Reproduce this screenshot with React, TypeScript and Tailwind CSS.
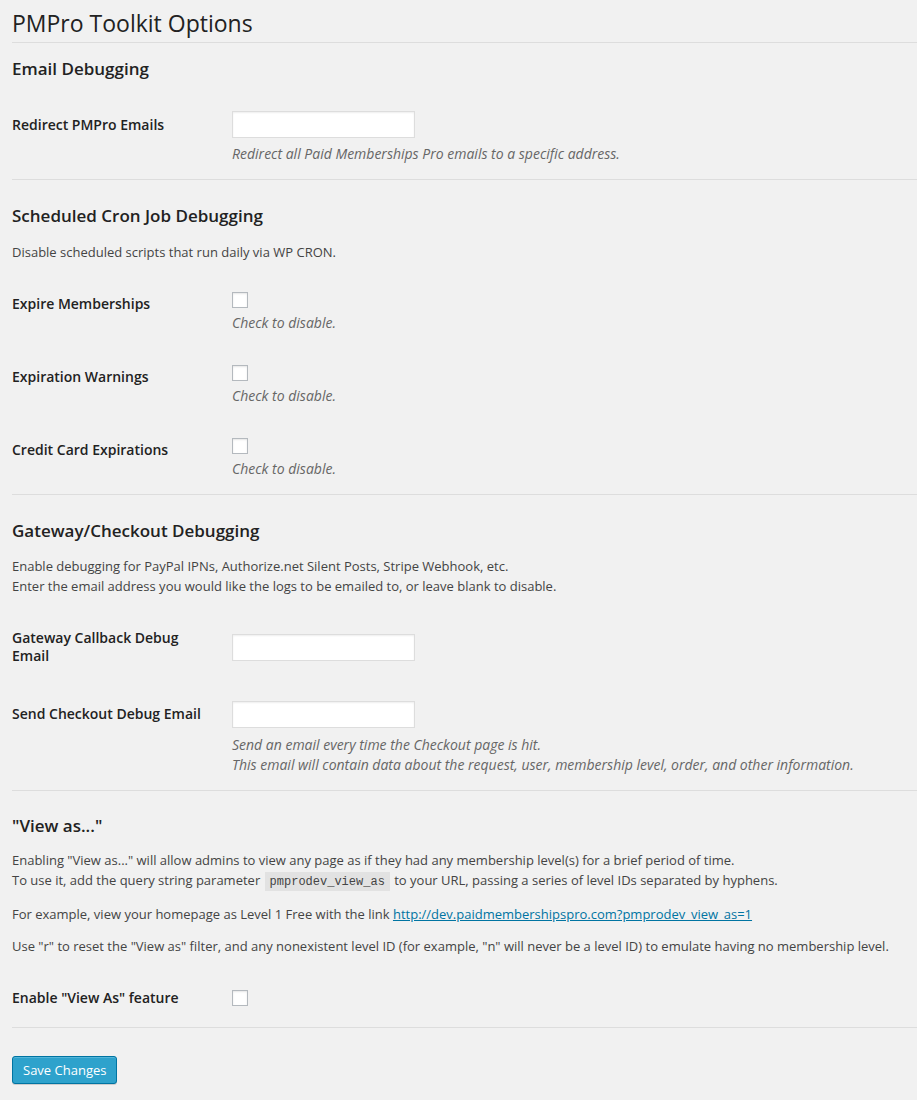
import React from 'react';

const font = { fontFamily: '"Open Sans", "Liberation Sans", sans-serif' };

function TextInput() {
  return (
    <input
      type="text"
      className="block w-[183px] h-[27px] bg-white border border-[#dddddd] shadow-[inset_0_1px_2px_rgba(0,0,0,0.07)] outline-none"
    />
  );
}

function Checkbox() {
  return (
    <span className="block w-[16px] h-[16px] bg-white border border-[#b4b9be] shadow-[inset_0_1px_2px_rgba(0,0,0,0.1)]" />
  );
}

function Heading({ children }: { children: React.ReactNode }) {
  return (
    <h3 className="text-[17px] leading-[24px] font-semibold text-[#222222]">{children}</h3>
  );
}

function Label({ children }: { children: React.ReactNode }) {
  return (
    <div className="w-[220px] shrink-0 pt-[20px] pb-[20px] pr-[10px] text-[14px] leading-[18px] font-semibold text-[#222222]">
      {children}
    </div>
  );
}

function Description({ children }: { children: React.ReactNode }) {
  return <p className="text-[14px] leading-[20px] italic text-[#666666]">{children}</p>;
}

function CheckRow({ label }: { label: string }) {
  return (
    <div className="flex">
      <Label>{label}</Label>
      <div className="py-[15px] flex flex-col justify-center">
        <div className="h-[18px] pt-[2px]">
          <Checkbox />
        </div>
        <div className="mt-[5px]">
          <Description>Check to disable.</Description>
        </div>
      </div>
    </div>
  );
}

export default function App() {
  return (
    <div className="min-h-[1100px] bg-[#f1f1f1] text-[#444444] text-[13px]" style={font}>
      <div className="pl-[12px]">
        {/* Page title */}
        <h1 className="pt-[9px] pb-[4px] text-[23px] leading-[29px] font-normal text-[#222222] border-b border-[#dddddd]">
          PMPro Toolkit Options
        </h1>

        {/* Email Debugging */}
        <div className="border-b border-[#dddddd]">
          <div className="mt-[14px]">
            <Heading>Email Debugging</Heading>
          </div>
          <div className="flex mt-[15px]">
            <Label>Redirect PMPro Emails</Label>
            <div className="py-[15px] flex flex-col justify-center">
              <TextInput />
              <div className="mt-[6px]">
                <Description>Redirect all Paid Memberships Pro emails to a specific address.</Description>
              </div>
            </div>
          </div>
        </div>

        {/* Scheduled Cron Job Debugging */}
        <div className="border-b border-[#dddddd]">
          <div className="mt-[24px]">
            <Heading>Scheduled Cron Job Debugging</Heading>
          </div>
          <p className="mt-[14px] leading-[20px]">Disable scheduled scripts that run daily via WP CRON.</p>
          <div className="mt-[13px]">
            <CheckRow label="Expire Memberships" />
            <CheckRow label="Expiration Warnings" />
            <CheckRow label="Credit Card Expirations" />
          </div>
        </div>

        {/* Gateway/Checkout Debugging */}
        <div className="border-b border-[#dddddd]">
          <div className="mt-[24px]">
            <Heading>Gateway/Checkout Debugging</Heading>
          </div>
          <p className="mt-[14px] leading-[19.5px]">
            Enable debugging for PayPal IPNs, Authorize.net Silent Posts, Stripe Webhook, etc.
            <br />
            Enter the email address you would like the logs to be emailed to, or leave blank to disable.
          </p>
          <div className="mt-[13px]">
            <div className="flex">
              <Label>
                Gateway Callback Debug
                <br />
                Email
              </Label>
              <div className="py-[15px] flex flex-col justify-center">
                <TextInput />
              </div>
            </div>
            <div className="flex">
              <Label>Send Checkout Debug Email</Label>
              <div className="py-[15px] flex flex-col justify-center">
                <div className="mt-[1px]">
                  <TextInput />
                </div>
                <div className="mt-[7px]">
                  <Description>
                    Send an email every time the Checkout page is hit.
                    <br />
                    This email will contain data about the request, user, membership level, order, and other information.
                  </Description>
                </div>
              </div>
            </div>
          </div>
        </div>

        {/* View as... */}
        <div className="border-b border-[#dddddd]">
          <div className="mt-[23px]">
            <Heading>"View as..."</Heading>
          </div>
          <p className="mt-[13px] leading-[19.5px]">
            Enabling "View as..." will allow admins to view any page as if they had any membership level(s) for a brief period of time.
            <br />
            To use it, add the query string parameter{' '}
            <code
              className="mx-[1px] px-[5px] pt-[3px] pb-[2px] bg-[#e2e2e2] text-[12px] text-[#444444]"
              style={{ fontFamily: '"Liberation Mono", "DejaVu Sans Mono", monospace' }}
            >
              pmprodev_view_as
            </code>{' '}
            to your URL, passing a series of level IDs separated by hyphens.
          </p>
          <p className="mt-[13px] leading-[19.5px]">
            For example, view your homepage as Level 1 Free with the link{' '}
            <a href="#" className="text-[#0074a2] underline">
              http://dev.paidmembershipspro.com?pmprodev_view_as=1
            </a>
          </p>
          <p className="mt-[12.5px] leading-[19.5px]">
            Use "r" to reset the "View as" filter, and any nonexistent level ID (for example, "n" will never be a level ID) to emulate having no membership level.
          </p>
          <div className="flex mt-[12px]">
            <Label>Enable "View As" feature</Label>
            <div className="py-[15px] flex flex-col justify-center">
              <Checkbox />
            </div>
          </div>
        </div>

        {/* Submit */}
        <div className="pt-[28px]">
          <button
            type="button"
            className="h-[28px] px-[10px] pb-[1px] rounded-[3px] bg-[#2ea2cc] border border-[#0074a2] text-white text-[13px] leading-[26px] shadow-[inset_0_1px_0_rgba(120,200,230,0.5),0_1px_0_rgba(0,0,0,0.15)]"
          >
            Save Changes
          </button>
        </div>
      </div>
    </div>
  );
}
